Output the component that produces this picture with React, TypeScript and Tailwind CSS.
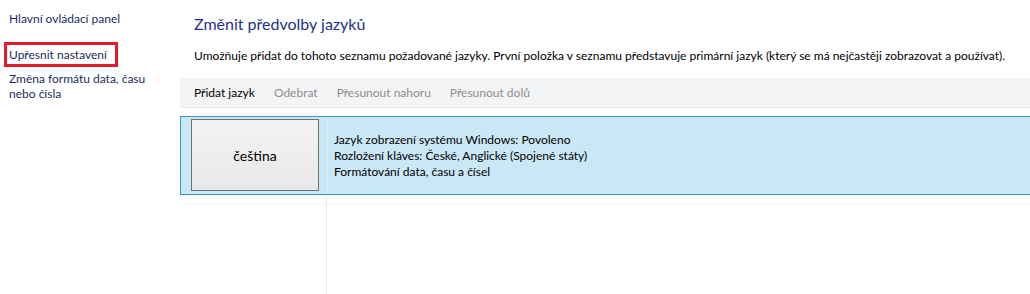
import React from 'react';

const font = { fontFamily: 'Lato, "Open Sans", sans-serif' };

const App = () => {
  return (
    <div className="flex w-[1030px] h-[294px] bg-white overflow-hidden text-[12px] leading-[15px]" style={font}>
      {/* Left navigation */}
      <div className="w-[180px] shrink-0 pt-[11px] pl-[9px] text-[#1b2c5e]">
        <div>Hlavní ovládací panel</div>
        <div className="mt-[16px] -ml-[5px] w-[114px] h-[25px] border-[3px] border-[#e21c2a] pl-[2px] pt-[2px]">
          Upřesnit nastavení
        </div>
        <div className="mt-[4px]">
          Změna formátu data, času
          <br />
          nebo čísla
        </div>
      </div>

      {/* Main content */}
      <div className="flex-1 flex flex-col min-w-0">
        <h1 className="pl-[14px] pt-[13px] h-[48px] text-[16px] leading-[22px] text-[#1e3287] font-normal">
          Změnit předvolby jazyků
        </h1>
        <p className="pl-[14px] h-[30px] text-black whitespace-nowrap">
          Umožňuje přidat do tohoto seznamu požadované jazyky. První položka v seznamu představuje primární jazyk (který se má nejčastěji zobrazovat a používat).
        </p>

        {/* Toolbar */}
        <div className="h-[30px] bg-[#f3f4f6] border-b border-[#e6e8eb] flex items-center pl-[14px] gap-[19px]">
          <span className="text-black">Přidat jazyk</span>
          <span className="text-[#8d8d8d]">Odebrat</span>
          <span className="text-[#8d8d8d]">Přesunout nahoru</span>
          <span className="text-[#8d8d8d]">Přesunout dolů</span>
        </div>

        {/* Language list */}
        <div className="relative flex-1 mt-[8px]">
          <div className="absolute left-[146px] top-0 bottom-0 w-px bg-[#e3eef6]" />
          <div className="relative flex h-[79px] w-[860px] bg-[#cae7f6] border border-[#3b96cc]">
            <div className="w-[146px] shrink-0 pl-[10px] pt-[2px]">
              <div className="w-[128px] h-[72px] border border-[#707070] bg-gradient-to-b from-[#f3f3f3] to-[#e8e8e8] flex items-center justify-center text-[14px] text-black">
                čeština
              </div>
            </div>
            <div className="w-px bg-[#d9edf8]" />
            <div className="pl-[6px] pt-[15px] text-black leading-[16px]">
              <div>Jazyk zobrazení systému Windows: Povoleno</div>
              <div>Rozložení kláves: České, Anglické (Spojené státy)</div>
              <div>Formátování data, času a čísel</div>
            </div>
          </div>
          <div className="h-px ml-[2px] w-[860px] bg-[#f4f7f9] mt-[8px]" />
        </div>
      </div>
    </div>
  );
};

export default App;
